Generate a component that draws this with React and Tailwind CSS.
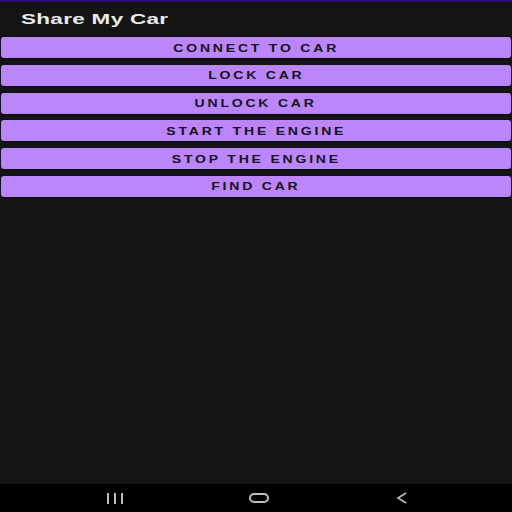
import React from "react";

const actions = [
  "Connect to car",
  "Lock car",
  "Unlock car",
  "Start the engine",
  "Stop the engine",
  "Find car",
];

export default function App() {
  return (
    <div
      className="w-[512px] h-[512px] flex flex-col bg-[#141414] overflow-hidden"
      style={{ fontFamily: '"Liberation Sans", Arial, sans-serif' }}
    >
      {/* status strip */}
      <div className="h-[2px] bg-[#2a0b78]" />

      {/* title */}
      <div className="h-[35px] flex items-center pl-[21px]">
        <h1 className="inline-block origin-left scale-x-150 text-[15px] font-bold text-[#ececec] tracking-[0.2px]">
          Share My Car
        </h1>
      </div>

      {/* buttons */}
      <main className="flex-1 flex flex-col gap-[6.8px] px-[1px]">
        {actions.map((label) => (
          <button
            key={label}
            className="h-[21px] w-full rounded-[3px] bg-[#bb86fc] text-[#141018] flex items-center justify-center pt-[1px] shadow-[0_1px_1px_rgba(0,0,0,0.6)]"
          >
            <span className="inline-block scale-x-[1.4] uppercase text-[10px] font-bold tracking-[2px]">
              {label}
            </span>
          </button>
        ))}
      </main>

      {/* nav bar */}
      <nav className="h-[28px] bg-black flex items-center justify-between pl-[107px] pr-[104px]">
        <div className="flex gap-[5px]">
          <span className="w-[2px] h-[11px] bg-[#bdbdbd]" />
          <span className="w-[2px] h-[11px] bg-[#bdbdbd]" />
          <span className="w-[2px] h-[11px] bg-[#bdbdbd]" />
        </div>
        <div className="w-[20px] h-[10px] rounded-[5px] border-[2px] border-[#bdbdbd] -translate-x-[1px]" />
        <svg width="12" height="12" viewBox="0 0 12 12" fill="none">
          <path d="M10 1 L2 6 L10 11" stroke="#bdbdbd" strokeWidth="1.6" />
        </svg>
      </nav>
    </div>
  );
}
